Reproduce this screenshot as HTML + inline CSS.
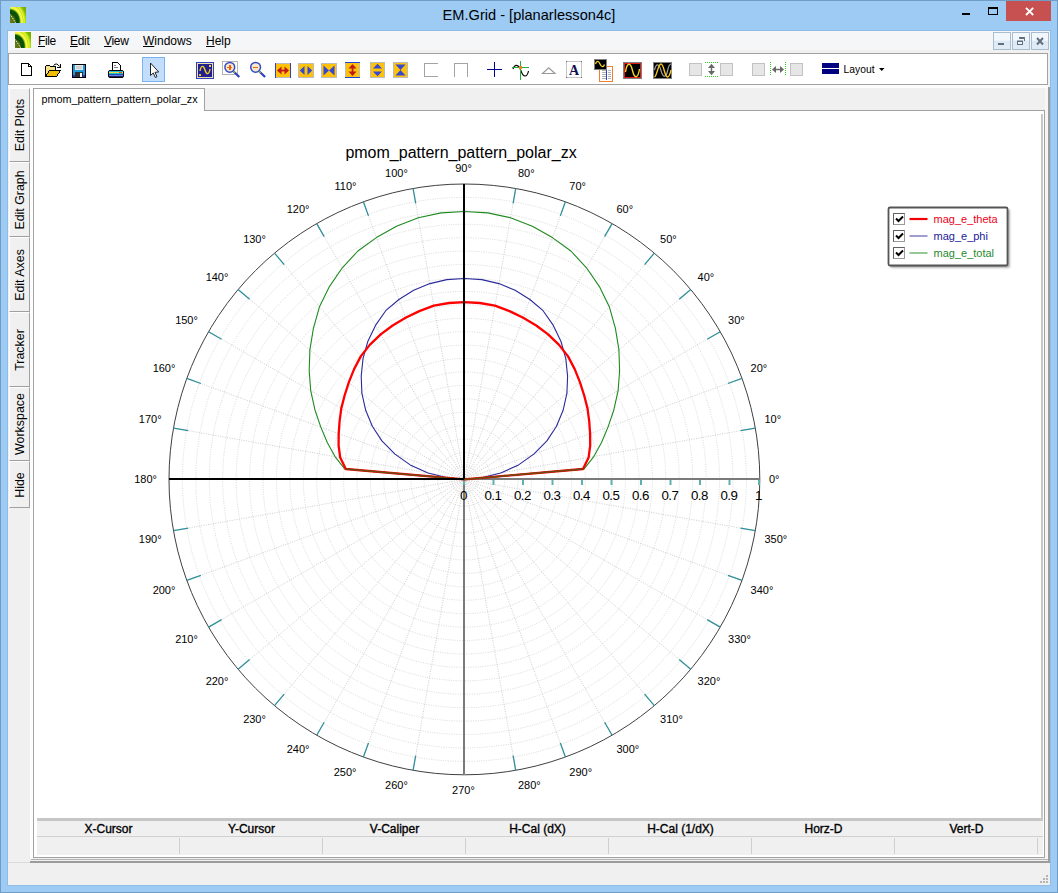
<!DOCTYPE html><html><head><meta charset="utf-8"><title>EM.Grid - [planarlesson4c]</title><style>
*{box-sizing:border-box;margin:0;padding:0}
html,body{width:1058px;height:893px;overflow:hidden;background:#9ccbf3}
body{position:relative;font-family:"Liberation Sans",Arial,sans-serif;font-size:12px;color:#000}
.abs{position:absolute}
#win{position:absolute;left:0;top:0;width:1058px;height:893px;background:#9dcbf4;border:1px solid #6f9dc6}
#client{position:absolute;left:8px;top:31px;width:1042px;height:854px;background:#f0f0f0}
#clientb{position:absolute;left:7px;top:30px;width:1044px;height:856px;border:1px solid #8fbde6}
#title{position:absolute;left:0;top:7px;width:1058px;text-align:center;font-size:14.6px;line-height:17px;color:#000;white-space:nowrap}
#menubar{position:absolute;left:8px;top:31px;width:1042px;height:19px;background:#f5f6f7}
.mi{position:absolute;top:34px;font-size:12px;line-height:14px;white-space:nowrap}
.mi u{text-decoration:underline;text-underline-offset:1px}
#toolbar{position:absolute;left:8px;top:53px;width:1040px;height:32px;background:#fff;border:1px solid #a2a2a2}
.vtab{position:absolute;left:9px;width:21px;background:#f0f0f0;border-right:1px solid #a0a0a0;border-bottom:1px solid #a0a0a0;border-top:1px solid #fdfdfd;border-left:1px solid #fdfdfd}
.vtab span{position:absolute;left:50%;top:50%;white-space:nowrap;font-size:12.400px;line-height:12px;transform:translate(-50%,-50%) rotate(-90deg);display:block}
#panel{position:absolute;left:33px;top:110px;width:1012px;height:748px;background:#fff;border:1px solid #a2a2a2}
#tab{position:absolute;left:33px;top:88px;width:172px;height:23px;background:#fff;border:1px solid #a2a2a2;border-bottom:none;font-size:10.800px;line-height:13px;padding:4px 0 0 7.500px;white-space:nowrap}
.hdr{position:absolute;top:822px;width:143px;text-align:center;font-size:12px;line-height:14px;-webkit-text-stroke:0.35px #000;white-space:nowrap}
.sep{position:absolute;top:838px;width:1px;height:16px;background:#cfcfcf}
</style></head><body>
<div id="win"></div><div id="clientb"></div><div id="client"></div>
<svg class="abs" style="left:10px;top:7px" width="16" height="16" viewBox="0 0 16 16"><defs><radialGradient id="g10" cx="0" cy="14.500" r="20" gradientUnits="userSpaceOnUse" gradientTransform="translate(0,14.500) scale(1,1.220) translate(0,-14.500)"><stop offset="0" stop-color="#6a7c14"/><stop offset="0.26" stop-color="#4c6e0a"/><stop offset="0.31" stop-color="#0c4c08"/><stop offset="0.46" stop-color="#0a5408"/><stop offset="0.51" stop-color="#8cc418"/><stop offset="0.55" stop-color="#f2f63c"/><stop offset="0.62" stop-color="#f8fa48"/><stop offset="0.66" stop-color="#c4da24"/><stop offset="0.7" stop-color="#ecf83c"/><stop offset="0.76" stop-color="#b4e410"/><stop offset="0.85" stop-color="#80b400"/><stop offset="1" stop-color="#74a400"/></radialGradient></defs><rect width="16" height="16" fill="url(#g10)"/><path d="M0 7.300 L5.800 16" stroke="#f0f0e8" stroke-width="1" stroke-dasharray="1.300 0.900" fill="none"/></svg>
<div id="title">EM.Grid - [planarlesson4c]</div>
<div class="abs" style="left:962px;top:12.500px;width:8px;height:2.500px;background:#000"></div>
<div class="abs" style="left:988px;top:7px;width:10px;height:8px;border:1px solid #000;border-top-width:2px"></div>
<div class="abs" style="left:1006px;top:1px;width:45px;height:20px;background:#c75050"></div>
<svg class="abs" style="left:1005.500px;top:1px" width="46" height="20" viewBox="0 0 46 20"><path d="M20 6.800 L27.200 14 M27.200 6.800 L20 14" stroke="#fff" stroke-width="1.800" fill="none"/></svg>
<div id="menubar"></div>
<svg class="abs" style="left:15px;top:32px" width="16" height="16" viewBox="0 0 16 16"><defs><radialGradient id="g15" cx="0" cy="14.500" r="20" gradientUnits="userSpaceOnUse" gradientTransform="translate(0,14.500) scale(1,1.220) translate(0,-14.500)"><stop offset="0" stop-color="#6a7c14"/><stop offset="0.26" stop-color="#4c6e0a"/><stop offset="0.31" stop-color="#0c4c08"/><stop offset="0.46" stop-color="#0a5408"/><stop offset="0.51" stop-color="#8cc418"/><stop offset="0.55" stop-color="#f2f63c"/><stop offset="0.62" stop-color="#f8fa48"/><stop offset="0.66" stop-color="#c4da24"/><stop offset="0.7" stop-color="#ecf83c"/><stop offset="0.76" stop-color="#b4e410"/><stop offset="0.85" stop-color="#80b400"/><stop offset="1" stop-color="#74a400"/></radialGradient></defs><rect width="16" height="16" fill="url(#g15)"/><path d="M0 7.300 L5.800 16" stroke="#f0f0e8" stroke-width="1" stroke-dasharray="1.300 0.900" fill="none"/></svg>
<div class="mi" style="left:38px;letter-spacing:-0.4px"><u>F</u>ile</div>
<div class="mi" style="left:70px;letter-spacing:-0.3px"><u>E</u>dit</div>
<div class="mi" style="left:104px;letter-spacing:-0.3px"><u>V</u>iew</div>
<div class="mi" style="left:143px;letter-spacing:0px"><u>W</u>indows</div>
<div class="mi" style="left:206px;letter-spacing:0px"><u>H</u>elp</div>
<div class="abs" style="left:993px;top:32px;width:18px;height:18px;border:1px solid #a9bdd2;background:linear-gradient(#f2f7fc,#f2f7fc 45%,#dde9f5 50%,#e2ecf6)"></div>
<div class="abs" style="left:1012px;top:32px;width:18px;height:18px;border:1px solid #a9bdd2;background:linear-gradient(#f2f7fc,#f2f7fc 45%,#dde9f5 50%,#e2ecf6)"></div>
<div class="abs" style="left:1031px;top:32px;width:18px;height:18px;border:1px solid #a9bdd2;background:linear-gradient(#f2f7fc,#f2f7fc 45%,#dde9f5 50%,#e2ecf6)"></div>
<svg class="abs" style="left:993px;top:32px" width="56" height="18" viewBox="993 32 56 18">
<rect x="998" y="43" width="6" height="2" fill="#5f6f80"/>
<path d="M1019.500 38.500 H1024.500 V41" fill="none" stroke="#5f6f80" stroke-width="1"/><rect x="1019" y="37" width="6" height="1.500" fill="#5f6f80"/>
<rect x="1017.500" y="41.500" width="5" height="3" fill="#eef4fa" stroke="#5f6f80"/><rect x="1017" y="40.500" width="6" height="1.500" fill="#5f6f80"/>
<path d="M1037 38 L1043 44.500 M1043 38 L1037 44.500" stroke="#5f6f80" stroke-width="2"/>
</svg>
<div id="toolbar"></div>
<svg class="abs" style="left:9px;top:54px" width="1038" height="30" viewBox="9 54 1038 30" font-family="Liberation Sans, Arial, sans-serif" shape-rendering="crispEdges">
<path d="M21.500 63.500 H28.500 L31.500 66.500 V75.500 H21.500 Z" fill="#fff" stroke="#000" stroke-width="1"/>
<path d="M28.500 63.500 V66.500 H31.500" fill="none" stroke="#000" stroke-width="1"/>
<path d="M45.500 76.500 V66.500 L46.500 65.500 H49.500 L50.500 66.500 H55.500 V70.500" fill="#f5e38a" stroke="#000"/>
<path d="M45.500 76.500 L49.500 70.500 H60.500 L56.500 76.500 Z" fill="#f2bc00" stroke="#000"/>
<path d="M53.500 65.500 Q56.500 62 59.500 66.500" fill="none" stroke="#000" shape-rendering="auto"/>
<path d="M57 67.500 H60.500 V64" fill="none" stroke="#000"/>
<rect x="72.500" y="64.500" width="13" height="13" fill="#1d9ae0" stroke="#000"/>
<rect x="75" y="65" width="8" height="5" fill="#e8e8e8"/><rect x="76" y="66" width="6" height="3" fill="#d0d0d0"/>
<rect x="75" y="72" width="8" height="5" fill="#303030"/><rect x="80" y="73" width="2" height="4" fill="#fff"/>
<rect x="73" y="75" width="2" height="2" fill="#3030c0"/><rect x="83" y="75" width="2" height="2" fill="#3030c0"/>
<path d="M112.500 70 V62.500 H117.500 L120.500 65.500 V70" fill="#fff" stroke="#000"/>
<path d="M114 65.500 H116 M114 67.500 H118" stroke="#888" fill="none"/>
<rect x="108.500" y="70.500" width="15" height="7" rx="1.500" fill="#1a1a1a" stroke="#000" shape-rendering="auto"/>
<rect x="109" y="71" width="14" height="1" fill="#20b8d8"/><rect x="109" y="72" width="14" height="1" fill="#e8e040"/><rect x="109" y="73" width="14" height="1" fill="#20c0c0"/><rect x="109" y="74" width="14" height="1" fill="#2050c0"/><rect x="109" y="75" width="14" height="1" fill="#6080e0"/><rect x="109" y="76" width="14" height="1" fill="#202060"/>
<rect x="119" y="72" width="3" height="1" fill="#f04040"/>
<rect x="142.500" y="57.500" width="22" height="24" fill="#c2defc" stroke="#7ab2f0"/>
<path d="M150.500 63 V75.500 L153.300 73 L155.300 77.500 L157 76.700 L155 72.300 L158.700 72 Z" fill="#fff" stroke="#222" stroke-width="1" shape-rendering="auto"/>
<rect x="196.500" y="62.500" width="17" height="16" fill="#202090" stroke="#3040c8"/>
<rect x="197.500" y="63.500" width="15" height="14" fill="none" stroke="#f0e0a0"/>
<path d="M200 71 C201 65 203.500 65 205 70 C206.500 75 209 75 210 69" fill="none" stroke="#f8d020" stroke-width="1.400" shape-rendering="auto"/>
<rect x="209" y="65" width="2" height="2" fill="#f8d020"/><rect x="199" y="74" width="2" height="2" fill="#f8d020"/>
<rect x="222.500" y="61.500" width="15" height="13" fill="#fff" stroke="#b4b4b4"/>
<g shape-rendering="auto"><line x1="233.60000000000002" y1="71.500" x2="239.3" y2="77" stroke="#3040c0" stroke-width="2.200"/><line x1="233.10000000000002" y1="71" x2="234.8" y2="72.700" stroke="#90c820" stroke-width="1.500"/><circle cx="229.8" cy="67.300" r="4.900" fill="#f6eccc" stroke="#3848c8" stroke-width="1.500"/></g>
<rect x="227.2" y="66.800" width="5.200" height="1.300" fill="#f06010"/>
<rect x="229.2" y="64.700" width="1.300" height="5.400" fill="#f06010"/>
<g shape-rendering="auto"><line x1="259.4" y1="71.500" x2="265.1" y2="77" stroke="#3040c0" stroke-width="2.200"/><line x1="258.9" y1="71" x2="260.6" y2="72.700" stroke="#90c820" stroke-width="1.500"/><circle cx="255.6" cy="67.300" r="4.900" fill="#f6eccc" stroke="#3848c8" stroke-width="1.500"/></g>
<rect x="253.0" y="66.800" width="5.200" height="1.300" fill="#f06010"/>
<rect x="275" y="63" width="16" height="15" fill="#ffc20a"/>
<rect x="275.5" y="63.5" width="15" height="14" fill="none" stroke="#bcbcbc"/>
<rect x="275" y="63" width="1.200" height="15" fill="#2840d8"/><rect x="289.8" y="63" width="1.200" height="15" fill="#2840d8"/>
<g shape-rendering="auto"><path d="M277 70.500 L281.500 66.500 V74.500 Z M289 70.500 L284.500 66.500 V74.500 Z" fill="#c01818"/><rect x="280" y="69.700" width="6" height="1.700" fill="#c01818"/></g>
<rect x="298" y="63" width="16" height="15" fill="#ffc20a"/>
<rect x="298.5" y="63.5" width="15" height="14" fill="none" stroke="#bcbcbc"/>
<g shape-rendering="auto"><path d="M299.800 70.500 L304.500 66 V75 Z M312.200 70.500 L307.500 66 V75 Z" fill="#3448d0"/></g>
<rect x="321" y="63" width="16" height="15" fill="#ffc20a"/>
<rect x="321.5" y="63.5" width="15" height="14" fill="none" stroke="#bcbcbc"/>
<g shape-rendering="auto"><path d="M323.500 65.500 L329 70.500 L323.500 75.500 Z M334.500 65.500 L329 70.500 L334.500 75.500 Z" fill="#3448d0"/></g>
<rect x="345" y="62" width="15" height="16" fill="#ffc20a"/>
<rect x="345.5" y="62.5" width="14" height="15" fill="none" stroke="#bcbcbc"/>
<rect x="345" y="62" width="15" height="1.200" fill="#2840d8"/><rect x="345" y="76.8" width="15" height="1.200" fill="#2840d8"/>
<g shape-rendering="auto"><path d="M352.500 64 L348.500 68.500 H356.500 Z M352.500 76 L348.500 71.500 H356.500 Z" fill="#c01818"/><rect x="351.700" y="67" width="1.700" height="6" fill="#c01818"/></g>
<rect x="370" y="62" width="15" height="16" fill="#ffc20a"/>
<rect x="370.5" y="62.5" width="14" height="15" fill="none" stroke="#bcbcbc"/>
<g shape-rendering="auto"><path d="M377.500 63.800 L373 68.500 H382 Z M377.500 76.200 L373 71.500 H382 Z" fill="#3448d0"/></g>
<rect x="393" y="62" width="15" height="16" fill="#ffc20a"/>
<rect x="393.5" y="62.5" width="14" height="15" fill="none" stroke="#bcbcbc"/>
<g shape-rendering="auto"><path d="M395.500 64.500 H405.500 L400.500 70 Z M395.500 75.500 H405.500 L400.500 70 Z" fill="#3448d0"/></g>
<path d="M438 63.500 H424.500 V76.500 H438" fill="none" stroke="#a4a4a4"/>
<path d="M454.500 77 V63.500 H467.500 V77" fill="none" stroke="#a4a4a4"/>
<rect x="487" y="68.700" width="15" height="1.400" fill="#000090"/><rect x="493.700" y="62" width="1.400" height="15" fill="#000090"/>
<path d="M513 69 C514.500 64.500 517 64.500 519.500 67.500 C521 70 522 76 525 76 C527 76 528 73.500 528.500 71" fill="none" stroke="#000" stroke-width="1.200" shape-rendering="auto"/>
<rect x="520" y="61" width="1" height="19" fill="#20b040"/><rect x="512" y="67" width="17" height="1" fill="#20b040"/>
<rect x="519" y="66" width="3" height="3" fill="#f08020"/>
<path d="M542.500 73.500 L548.700 67.800 L555 73.500 Z" fill="none" stroke="#9a9a9a" stroke-width="1.200" shape-rendering="auto"/>
<rect x="566.500" y="61.500" width="15" height="16" fill="#fff" stroke="#c4c4c4"/>
<rect x="566" y="61" width="1" height="1" fill="#707070"/>
<rect x="581" y="61" width="1" height="1" fill="#707070"/>
<rect x="566" y="77" width="1" height="1" fill="#707070"/>
<rect x="581" y="77" width="1" height="1" fill="#707070"/>
<text x="574" y="74.500" font-family="Liberation Serif, serif" font-weight="bold" font-size="14" text-anchor="middle" fill="#101050" shape-rendering="auto">A</text>
<rect x="599.500" y="66.500" width="13" height="15" fill="#fff" stroke="#f08030"/>
<rect x="602" y="70" width="3.500" height="1" fill="#b0b0b0"/><rect x="607.500" y="70" width="3.500" height="1" fill="#b0b0b0"/>
<rect x="602" y="72" width="3.500" height="1" fill="#b0b0b0"/><rect x="607.500" y="72" width="3.500" height="1" fill="#b0b0b0"/>
<rect x="602" y="74" width="3.500" height="1" fill="#b0b0b0"/><rect x="607.500" y="74" width="3.500" height="1" fill="#b0b0b0"/>
<rect x="602" y="76" width="3.500" height="1" fill="#b0b0b0"/><rect x="607.500" y="76" width="3.500" height="1" fill="#b0b0b0"/>
<rect x="602" y="78" width="3.500" height="1" fill="#b0b0b0"/><rect x="607.500" y="78" width="3.500" height="1" fill="#b0b0b0"/>
<rect x="606" y="69" width="1.300" height="11" fill="#3040d0"/>
<rect x="594" y="59.500" width="12" height="10" fill="#000" stroke="#808080"/>
<path d="M595.500 64 C596.500 60.500 598.500 60.500 600 64 C601.500 67.500 603.500 67.500 604.500 64.500" fill="none" stroke="#f8d820" stroke-width="1.300" shape-rendering="auto"/>
<rect x="623.500" y="62.500" width="18" height="16" fill="#000" stroke="#808080"/>
<rect x="624.500" y="63.500" width="16" height="14" fill="none" stroke="#e01818"/>
<path d="M625.500 72 C627 62 630.500 62 632.500 70.500 C634.500 79 638 79 639.500 69" fill="none" stroke="#f8d820" stroke-width="1.400" shape-rendering="auto"/>
<rect x="653.500" y="62.500" width="18" height="16" fill="#000" stroke="#808080"/>
<path d="M654.500 70 C656 63 659 63 661 70.500 C663 78 666 78 667.500 71 C668.500 66 670 64 671 64" fill="none" stroke="#a0a0a0" stroke-width="1.200" shape-rendering="auto"/>
<path d="M654.500 77 C657 76 658 64 661 64 C664 64 664.500 77 667.500 77 C669.500 77 670.500 72 671 70" fill="none" stroke="#f8c820" stroke-width="1.400" shape-rendering="auto"/>
<rect x="689.5" y="63.500" width="12" height="12" fill="#e6e6e6" stroke="#c2c2c2"/>
<rect x="720.5" y="63.500" width="12" height="12" fill="#e6e6e6" stroke="#c2c2c2"/>
<rect x="752.5" y="63.500" width="12" height="12" fill="#e6e6e6" stroke="#c2c2c2"/>
<rect x="790.5" y="63.500" width="12" height="12" fill="#e6e6e6" stroke="#c2c2c2"/>
<path d="M705 62.500 H718 M705 76.500 H718" stroke="#30d020" stroke-dasharray="1 1" fill="none"/>
<g shape-rendering="auto"><path d="M711.500 63.800 L708 68 H715 Z M711.500 75.200 L708 71 H715 Z" fill="#686868"/><rect x="710.800" y="66" width="1.400" height="7" fill="#686868"/></g>
<path d="M770.500 62 V76 M785.500 62 V76" stroke="#30d020" stroke-dasharray="1 1" fill="none"/>
<g shape-rendering="auto"><path d="M772 69.500 L776 66 V73 Z M784 69.500 L780 66 V73 Z" fill="#686868"/><rect x="775" y="68.800" width="6" height="1.400" fill="#686868"/></g>
<rect x="822" y="63" width="17" height="11" fill="#000080"/><rect x="822" y="68" width="17" height="1" fill="#fff"/>
<text x="843.500" y="73" font-size="11.500" fill="#000" textLength="31" lengthAdjust="spacingAndGlyphs" shape-rendering="auto">Layout</text>
<path d="M879 68 H884.500 L881.750 71 Z" fill="#000" shape-rendering="auto"/>
</svg>
<div class="vtab" style="top:88px;height:74px"><span>Edit Plots</span></div>
<div class="vtab" style="top:162px;height:75px"><span>Edit Graph</span></div>
<div class="vtab" style="top:237px;height:75px"><span>Edit Axes</span></div>
<div class="vtab" style="top:312px;height:75px"><span>Tracker</span></div>
<div class="vtab" style="top:387px;height:74px"><span>Workspace</span></div>
<div class="vtab" style="top:461px;height:47px"><span>Hide</span></div>
<div class="abs" style="left:8px;top:85px;width:1040px;height:3px;background:#fcfcfc"></div>
<div class="abs" style="left:30px;top:88px;width:3px;height:771px;background:#fdfdfd"></div>
<div class="abs" style="left:1045px;top:88px;width:3px;height:771px;background:#f6f6f6"></div>
<div class="abs" style="left:1048px;top:87px;width:2px;height:776px;background:#9c9c9c"></div>
<div class="abs" style="left:31px;top:859px;width:1017px;height:1px;background:#b4b4b4"></div>
<div class="abs" style="left:30px;top:861px;width:1020px;height:2px;background:#9c9c9c"></div>
<div class="abs" style="left:8px;top:862px;width:22px;height:1px;background:#dadada"></div>
<div id="panel"></div><div id="tab">pmom_pattern_pattern_polar_zx</div>
<svg class="abs" style="left:34px;top:110px" width="1007" height="708" viewBox="34 110 1007 708" font-family="Liberation Sans, Arial, sans-serif">
<g fill="none" stroke="#d2d2d2" stroke-width="0.9" stroke-dasharray="1 1.4">
<circle cx="464.4" cy="479.4" r="13.43"/>
<circle cx="464.4" cy="479.4" r="26.85"/>
<circle cx="464.4" cy="479.4" r="40.28"/>
<circle cx="464.4" cy="479.4" r="53.71"/>
<circle cx="464.4" cy="479.4" r="67.14"/>
<circle cx="464.4" cy="479.4" r="80.56"/>
<circle cx="464.4" cy="479.4" r="93.99"/>
<circle cx="464.4" cy="479.4" r="107.42"/>
<circle cx="464.4" cy="479.4" r="120.85"/>
<circle cx="464.4" cy="479.4" r="134.27"/>
<circle cx="464.4" cy="479.4" r="147.70"/>
<circle cx="464.4" cy="479.4" r="161.13"/>
<circle cx="464.4" cy="479.4" r="174.55"/>
<circle cx="464.4" cy="479.4" r="187.98"/>
<circle cx="464.4" cy="479.4" r="201.41"/>
<circle cx="464.4" cy="479.4" r="214.84"/>
<circle cx="464.4" cy="479.4" r="228.26"/>
<circle cx="464.4" cy="479.4" r="241.69"/>
<circle cx="464.4" cy="479.4" r="255.12"/>
<circle cx="464.4" cy="479.4" r="268.55"/>
<circle cx="464.4" cy="479.4" r="281.97"/>
</g>
<g stroke="#c6c6c6" stroke-width="0.9" stroke-dasharray="1 1.4">
<line x1="464.4" y1="479.4" x2="755.3" y2="428.1"/>
<line x1="464.4" y1="479.4" x2="742.0" y2="378.4"/>
<line x1="464.4" y1="479.4" x2="720.2" y2="331.7"/>
<line x1="464.4" y1="479.4" x2="690.7" y2="289.5"/>
<line x1="464.4" y1="479.4" x2="654.3" y2="253.1"/>
<line x1="464.4" y1="479.4" x2="612.1" y2="223.6"/>
<line x1="464.4" y1="479.4" x2="565.4" y2="201.8"/>
<line x1="464.4" y1="479.4" x2="515.7" y2="188.5"/>
<line x1="464.4" y1="479.4" x2="413.1" y2="188.5"/>
<line x1="464.4" y1="479.4" x2="363.4" y2="201.8"/>
<line x1="464.4" y1="479.4" x2="316.7" y2="223.6"/>
<line x1="464.4" y1="479.4" x2="274.5" y2="253.1"/>
<line x1="464.4" y1="479.4" x2="238.1" y2="289.5"/>
<line x1="464.4" y1="479.4" x2="208.6" y2="331.7"/>
<line x1="464.4" y1="479.4" x2="186.8" y2="378.4"/>
<line x1="464.4" y1="479.4" x2="173.5" y2="428.1"/>
<line x1="464.4" y1="479.4" x2="173.5" y2="530.7"/>
<line x1="464.4" y1="479.4" x2="186.8" y2="580.4"/>
<line x1="464.4" y1="479.4" x2="208.6" y2="627.1"/>
<line x1="464.4" y1="479.4" x2="238.1" y2="669.3"/>
<line x1="464.4" y1="479.4" x2="274.5" y2="705.7"/>
<line x1="464.4" y1="479.4" x2="316.7" y2="735.2"/>
<line x1="464.4" y1="479.4" x2="363.4" y2="757.0"/>
<line x1="464.4" y1="479.4" x2="413.1" y2="770.3"/>
<line x1="464.4" y1="479.4" x2="515.7" y2="770.3"/>
<line x1="464.4" y1="479.4" x2="565.4" y2="757.0"/>
<line x1="464.4" y1="479.4" x2="612.1" y2="735.2"/>
<line x1="464.4" y1="479.4" x2="654.3" y2="705.7"/>
<line x1="464.4" y1="479.4" x2="690.7" y2="669.3"/>
<line x1="464.4" y1="479.4" x2="720.2" y2="627.1"/>
<line x1="464.4" y1="479.4" x2="742.0" y2="580.4"/>
<line x1="464.4" y1="479.4" x2="755.3" y2="530.7"/>
</g>
<circle cx="464.4" cy="479.4" r="295.4" fill="none" stroke="#404040" stroke-width="1"/>
<g stroke="#2f8f9b" stroke-width="1.3">
<line x1="740.5" y1="430.7" x2="755.3" y2="428.1"/>
<line x1="727.9" y1="383.5" x2="742.0" y2="378.4"/>
<line x1="707.2" y1="339.2" x2="720.2" y2="331.7"/>
<line x1="679.2" y1="299.2" x2="690.7" y2="289.5"/>
<line x1="644.6" y1="264.6" x2="654.3" y2="253.1"/>
<line x1="604.6" y1="236.6" x2="612.1" y2="223.6"/>
<line x1="560.3" y1="215.9" x2="565.4" y2="201.8"/>
<line x1="513.1" y1="203.3" x2="515.7" y2="188.5"/>
<line x1="415.7" y1="203.3" x2="413.1" y2="188.5"/>
<line x1="368.5" y1="215.9" x2="363.4" y2="201.8"/>
<line x1="324.2" y1="236.6" x2="316.7" y2="223.6"/>
<line x1="284.2" y1="264.6" x2="274.5" y2="253.1"/>
<line x1="249.6" y1="299.2" x2="238.1" y2="289.5"/>
<line x1="221.6" y1="339.2" x2="208.6" y2="331.7"/>
<line x1="200.9" y1="383.5" x2="186.8" y2="378.4"/>
<line x1="188.3" y1="430.7" x2="173.5" y2="428.1"/>
<line x1="188.3" y1="528.1" x2="173.5" y2="530.7"/>
<line x1="200.9" y1="575.3" x2="186.8" y2="580.4"/>
<line x1="221.6" y1="619.6" x2="208.6" y2="627.1"/>
<line x1="249.6" y1="659.6" x2="238.1" y2="669.3"/>
<line x1="284.2" y1="694.2" x2="274.5" y2="705.7"/>
<line x1="324.2" y1="722.2" x2="316.7" y2="735.2"/>
<line x1="368.5" y1="742.9" x2="363.4" y2="757.0"/>
<line x1="415.7" y1="755.5" x2="413.1" y2="770.3"/>
<line x1="513.1" y1="755.5" x2="515.7" y2="770.3"/>
<line x1="560.3" y1="742.9" x2="565.4" y2="757.0"/>
<line x1="604.6" y1="722.2" x2="612.1" y2="735.2"/>
<line x1="644.6" y1="694.2" x2="654.3" y2="705.7"/>
<line x1="679.2" y1="659.6" x2="690.7" y2="669.3"/>
<line x1="707.2" y1="619.6" x2="720.2" y2="627.1"/>
<line x1="727.9" y1="575.3" x2="742.0" y2="580.4"/>
<line x1="740.5" y1="528.1" x2="755.3" y2="530.7"/>
</g>
<rect x="463" y="479" width="2" height="295" fill="#7a7a7a"/>
<rect x="464" y="478" width="296" height="2" fill="#7a7a7a"/>
<rect x="463.0" y="480" width="2" height="5" fill="#5fb0b0"/>
<rect x="492.5" y="480" width="2" height="5" fill="#5fb0b0"/>
<rect x="522.0" y="480" width="2" height="5" fill="#5fb0b0"/>
<rect x="551.5" y="480" width="2" height="5" fill="#5fb0b0"/>
<rect x="581.0" y="480" width="2" height="5" fill="#5fb0b0"/>
<rect x="610.5" y="480" width="2" height="5" fill="#5fb0b0"/>
<rect x="640.0" y="480" width="2" height="5" fill="#5fb0b0"/>
<rect x="669.5" y="480" width="2" height="5" fill="#5fb0b0"/>
<rect x="699.0" y="480" width="2" height="5" fill="#5fb0b0"/>
<rect x="728.5" y="480" width="2" height="5" fill="#5fb0b0"/>
<rect x="758.0" y="480" width="2" height="5" fill="#5fb0b0"/>
<polyline points="464.4,479.4 584.1,468.9 593.8,456.6 601.4,442.7 608.0,427.1 613.9,409.7 618.1,390.7 619.6,370.7 618.9,349.7 615.4,328.4 609.3,306.7 599.4,286.6 586.5,267.8 570.9,251.0 552.4,237.6 532.3,226.2 510.5,217.7 487.7,212.9 464.4,211.5 441.1,212.9 418.3,217.7 396.5,226.2 376.4,237.6 357.9,251.0 342.3,267.8 329.4,286.6 319.5,306.7 313.4,328.4 309.9,349.7 309.2,370.7 310.7,390.7 314.9,409.7 320.8,427.1 327.4,442.7 335.0,456.6 344.7,468.9 464.4,479.4" fill="none" stroke="#1f8a1f" stroke-width="1.1" stroke-linejoin="round"/>
<polyline points="464.4,479.4 480.6,478.0 500.8,473.0 518.6,464.9 533.8,454.1 546.9,440.9 556.5,426.2 563.1,410.3 566.9,393.4 567.6,376.2 565.8,358.6 561.0,341.5 553.3,325.4 543.1,310.7 529.9,299.5 515.1,290.2 498.9,283.6 481.9,279.6 464.4,278.5 446.9,279.6 429.9,283.6 413.7,290.2 398.9,299.5 385.7,310.7 375.5,325.4 367.8,341.5 363.0,358.6 361.2,376.2 361.9,393.4 365.7,410.3 372.3,426.2 381.9,440.9 395.0,454.1 410.2,464.9 428.0,473.0 448.2,478.0 464.4,479.4" fill="none" stroke="#2a2a9a" stroke-width="1.1" stroke-linejoin="round"/>
<polyline points="464.4,479.4 583.0,469.0 588.6,457.5 590.2,445.7 590.1,433.6 589.2,421.2 587.5,408.4 584.2,395.5 580.0,382.4 574.7,369.1 567.9,356.1 558.8,344.6 548.1,334.3 536.2,325.5 523.2,317.8 509.5,311.1 495.0,305.7 479.8,303.0 464.4,302.2 449.0,303.0 433.8,305.7 419.3,311.1 405.6,317.8 392.6,325.5 380.7,334.3 370.0,344.6 360.9,356.1 354.1,369.1 348.8,382.4 344.6,395.5 341.3,408.4 339.6,421.2 338.7,433.6 338.6,445.7 340.2,457.5 345.8,469.0 464.4,479.4" fill="none" stroke="#ff0000" stroke-width="2.3" stroke-linejoin="round"/>
<polyline points="464.4,479.4 583.0,469.0" fill="none" stroke="#6a4a10" stroke-width="1.5"/>
<polyline points="345.8,469.0 464.4,479.4" fill="none" stroke="#6a4a10" stroke-width="1.5"/>
<rect x="169" y="478" width="295" height="2" fill="#000"/>
<rect x="463" y="184" width="2" height="295" fill="#000"/>
<g font-size="13.300" text-anchor="middle" fill="#000" letter-spacing="-0.450">
<text x="463.5" y="500">0</text>
<text x="493.0" y="500">0.1</text>
<text x="522.5" y="500">0.2</text>
<text x="552.0" y="500">0.3</text>
<text x="581.5" y="500">0.4</text>
<text x="611.0" y="500">0.5</text>
<text x="640.5" y="500">0.6</text>
<text x="670.0" y="500">0.7</text>
<text x="699.5" y="500">0.8</text>
<text x="729.0" y="500">0.9</text>
<text x="758.5" y="500">1</text>
</g>
<g font-size="11" fill="#000">
<text x="769.0" y="483.0" text-anchor="start">0°</text>
<text x="764.4" y="423.0" text-anchor="start">10°</text>
<text x="750.6" y="371.7" text-anchor="start">20°</text>
<text x="728.1" y="323.5" text-anchor="start">30°</text>
<text x="697.6" y="280.9" text-anchor="start">40°</text>
<text x="660.1" y="243.4" text-anchor="start">50°</text>
<text x="616.5" y="212.9" text-anchor="start">60°</text>
<text x="569.3" y="190.4" text-anchor="start">70°</text>
<text x="518.0" y="176.6" text-anchor="start">80°</text>
<text x="463.5" y="172.0" text-anchor="middle">90°</text>
<text x="407.8" y="176.6" text-anchor="end">100°</text>
<text x="356.5" y="190.4" text-anchor="end">110°</text>
<text x="309.5" y="212.9" text-anchor="end">120°</text>
<text x="265.9" y="243.4" text-anchor="end">130°</text>
<text x="228.4" y="280.9" text-anchor="end">140°</text>
<text x="197.9" y="323.5" text-anchor="end">150°</text>
<text x="175.4" y="371.7" text-anchor="end">160°</text>
<text x="161.6" y="423.0" text-anchor="end">170°</text>
<text x="157.0" y="483.0" text-anchor="end">180°</text>
<text x="161.6" y="543.0" text-anchor="end">190°</text>
<text x="175.4" y="594.3" text-anchor="end">200°</text>
<text x="197.9" y="642.5" text-anchor="end">210°</text>
<text x="228.4" y="685.1" text-anchor="end">220°</text>
<text x="265.9" y="722.6" text-anchor="end">230°</text>
<text x="309.5" y="753.1" text-anchor="end">240°</text>
<text x="356.5" y="775.6" text-anchor="end">250°</text>
<text x="407.8" y="789.4" text-anchor="end">260°</text>
<text x="463.5" y="794.0" text-anchor="middle">270°</text>
<text x="518.0" y="789.4" text-anchor="start">280°</text>
<text x="569.3" y="775.6" text-anchor="start">290°</text>
<text x="616.5" y="753.1" text-anchor="start">300°</text>
<text x="660.1" y="722.6" text-anchor="start">310°</text>
<text x="697.6" y="685.1" text-anchor="start">320°</text>
<text x="728.1" y="642.5" text-anchor="start">330°</text>
<text x="750.6" y="594.3" text-anchor="start">340°</text>
<text x="764.4" y="543.0" text-anchor="start">350°</text>
</g>
<text x="461" y="158" font-size="16" text-anchor="middle" fill="#000">pmom_pattern_pattern_polar_zx</text>
<defs><filter id="lsh" x="-10%" y="-10%" width="130%" height="130%"><feGaussianBlur stdDeviation="1"/></filter></defs><rect x="890.500" y="209.500" width="119" height="58" fill="#6a6a6a" opacity="0.7" filter="url(#lsh)"/>
<rect x="888.500" y="207.500" width="119" height="58" rx="1.500" fill="#fff" stroke="#555" stroke-width="1.800"/>
<rect x="893.5" y="213.5" width="11" height="11" fill="#fff" stroke="#9a9a9a"/>
<path d="M893.5 224.5 V213.5 H904.5" stroke="#606060" fill="none"/>
<path d="M896 218.5 L898.5 221 L903 216.5" stroke="#000" stroke-width="2" fill="none"/>
<line x1="909.5" y1="219" x2="927.5" y2="219" stroke="#f00000" stroke-width="2.2"/>
<text x="933.5" y="222.5" font-size="11" fill="#f00020">mag_e_theta</text>
<rect x="893.5" y="230.5" width="11" height="11" fill="#fff" stroke="#9a9a9a"/>
<path d="M893.5 241.5 V230.5 H904.5" stroke="#606060" fill="none"/>
<path d="M896 235.5 L898.5 238 L903 233.5" stroke="#000" stroke-width="2" fill="none"/>
<line x1="909.5" y1="236" x2="927.5" y2="236" stroke="#6a6ab8" stroke-width="1.3"/>
<text x="933.5" y="239.5" font-size="11" fill="#20209a">mag_e_phi</text>
<rect x="893.5" y="247.5" width="11" height="11" fill="#fff" stroke="#9a9a9a"/>
<path d="M893.5 258.5 V247.5 H904.5" stroke="#606060" fill="none"/>
<path d="M896 252.5 L898.5 255 L903 250.5" stroke="#000" stroke-width="2" fill="none"/>
<line x1="909.5" y1="253" x2="927.5" y2="253" stroke="#5aaa5a" stroke-width="1.3"/>
<text x="933.5" y="256.5" font-size="11" fill="#1f8a2f">mag_e_total</text>
</svg>
<div class="abs" style="left:37px;top:818px;width:1006px;height:3px;background:#c6c6c6"></div>
<div class="abs" style="left:1041px;top:114px;width:2px;height:706px;background:#c9c9c9"></div>
<div class="abs" style="left:37px;top:821px;width:1006px;height:34px;background:#f0f0f0"></div>
<div class="abs" style="left:37px;top:836px;width:1006px;height:1px;background:#d0d0d0"></div>
<div class="hdr" style="left:37px">X-Cursor</div>
<div class="sep" style="left:179px"></div>
<div class="hdr" style="left:180px">Y-Cursor</div>
<div class="sep" style="left:322px"></div>
<div class="hdr" style="left:323px">V-Caliper</div>
<div class="sep" style="left:465px"></div>
<div class="hdr" style="left:466px">H-Cal (dX)</div>
<div class="sep" style="left:608px"></div>
<div class="hdr" style="left:609px">H-Cal (1/dX)</div>
<div class="sep" style="left:751px"></div>
<div class="hdr" style="left:752px">Horz-D</div>
<div class="sep" style="left:894px"></div>
<div class="hdr" style="left:895px">Vert-D</div>
<div class="sep" style="left:1037px"></div>
<svg class="abs" style="left:1038px;top:873px" width="12" height="12" viewBox="0 0 12 12" shape-rendering="crispEdges"><g fill="#b4b4b4"><rect x="8" y="2" width="2" height="2"/><rect x="5" y="5" width="2" height="2"/><rect x="8" y="5" width="2" height="2"/><rect x="2" y="8" width="2" height="2"/><rect x="5" y="8" width="2" height="2"/><rect x="8" y="8" width="2" height="2"/></g></svg>
</body></html>
